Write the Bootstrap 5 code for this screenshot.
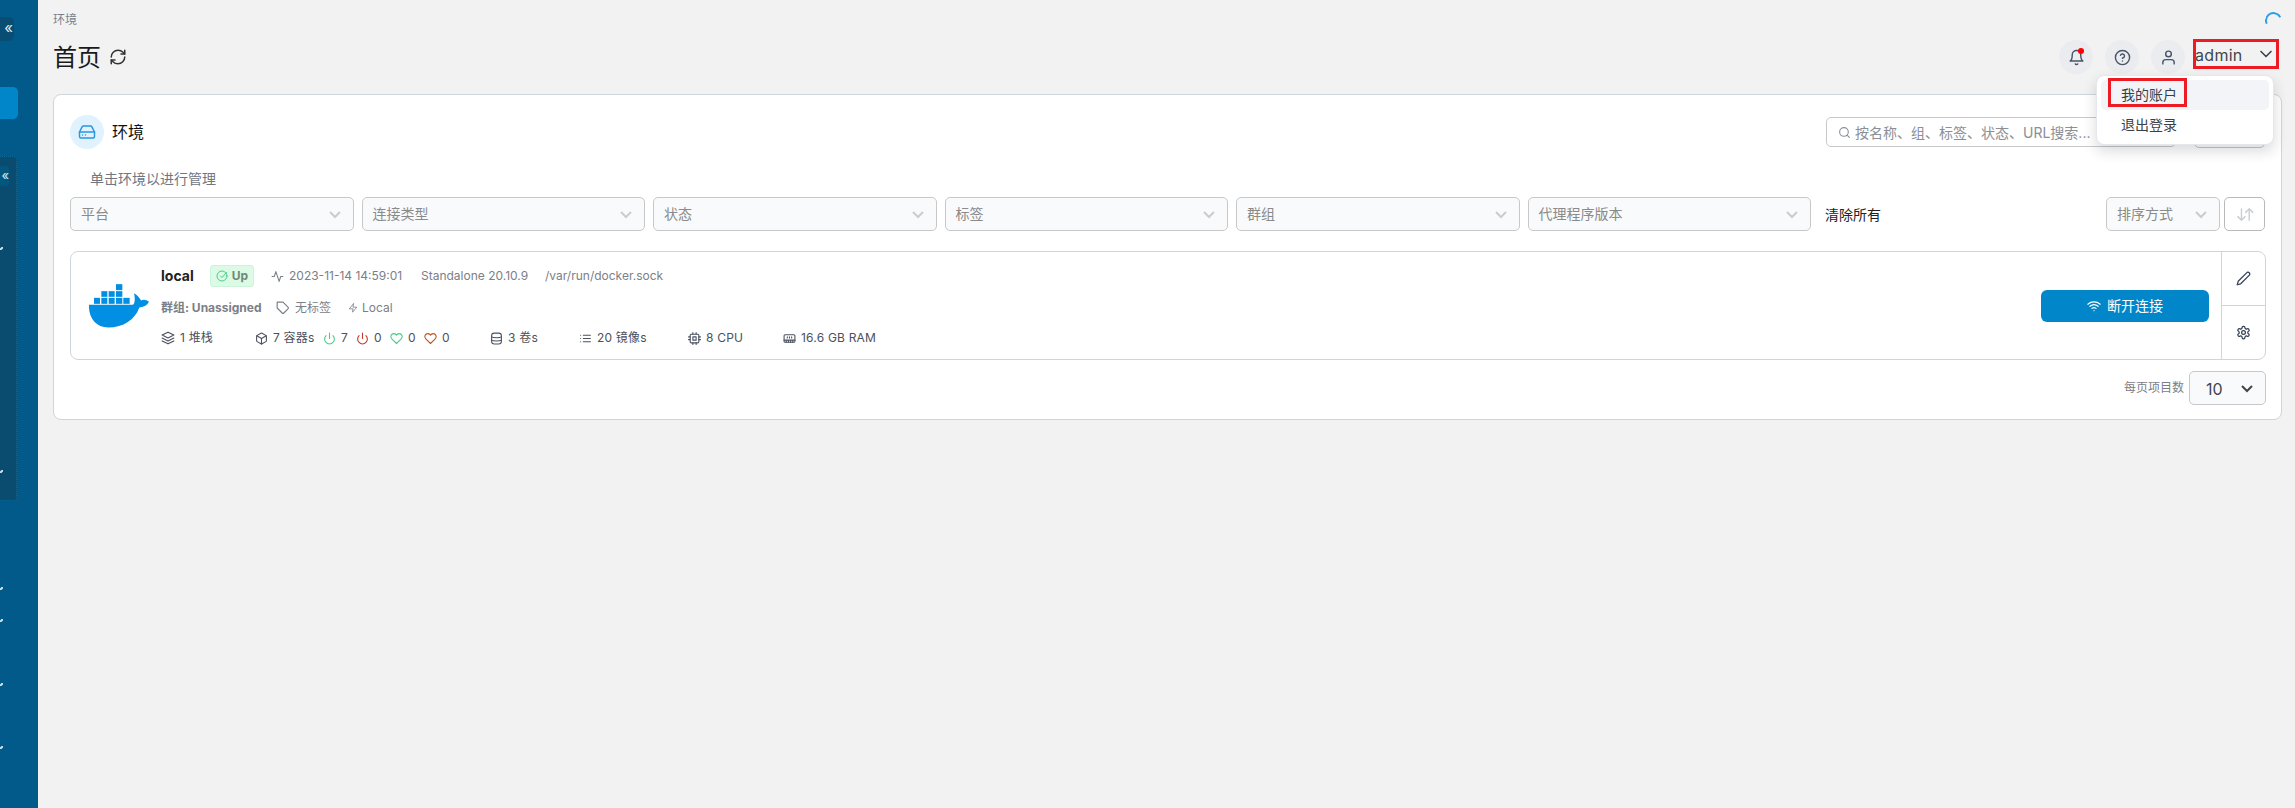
<!doctype html>
<html lang="zh"><head><meta charset="utf-8"><title>环境</title>
<link href="https://cdn.jsdelivr.net/npm/bootstrap@5.3.0/dist/css/bootstrap.min.css" rel="stylesheet">
<style>
html,body{height:808px;overflow:hidden}
body{background:#f2f2f2;font-family:Inter,"Noto Sans CJK SC",sans-serif;color:#344054;font-size:12px}
.ic{fill:none;stroke:currentColor;stroke-width:2;stroke-linecap:round;stroke-linejoin:round;flex:none}
.side-rail{width:38px;height:808px;background:#025a8b;flex:none;overflow:hidden}
.rail-logo{width:14px;height:24px;margin-top:17px;background:#0a4d73;border-radius:0 5px 5px 0;color:#dfe8ee;font-size:15px;line-height:22px;text-align:right;padding-right:1px;overflow:hidden}
.rail-active{width:18px;height:32px;margin-top:46px;background:#0086c9;border-radius:0 5px 5px 0}
.rail-panel{width:17px;height:345px;margin-top:37px;background:#0a4b70;border:1px dotted #0f6a9a;border-left:0;border-radius:0 4px 4px 0;overflow:hidden}
.rail-mini{width:9px;height:20px;margin-top:9px;background:#03577f;border-radius:0 4px 4px 0;color:#dfe8ee;font-size:13px;line-height:19px;text-align:right;overflow:hidden}
.tick{display:block;width:3px;height:3px;color:#cfe0ea}
.t1{margin-top:61px}.t2{margin-top:220px}.t3{margin-top:86px}.t4{margin-top:29px}.t5{margin-top:61px}.t6{margin-top:60px}
.page-main{flex:1 1 0;min-width:0;padding:10px 13px 0 15px;position:relative}
.crumb{font-size:12px;line-height:20px;color:#7b8087}
.head-row{height:54px;margin-top:10px;margin-right:3px}
.page-title{font-size:24px;line-height:36px;font-weight:400;color:#1a1a1a;margin:0}
.round-set{gap:12px}
.round-btn{width:34px;height:34px;border-radius:50%;background:#eaecf0;color:#475467;position:relative}
.bell-dot{position:absolute;top:8px;left:19px;width:6px;height:6px;border-radius:50%;background:#f00}
.user-menu{position:relative;width:86px;height:30px;margin-top:-1px;border:3px solid #ed1c24;color:#3f4650;font-size:16px;line-height:26px;padding-top:2px;letter-spacing:.3px;margin-left:0}
.user-menu>span{margin-left:-1px}
.user-menu .chev{margin-left:auto;margin-top:-2px}
.menu-open{display:block;position:absolute;top:33px;right:2px;left:auto;width:178px;height:70px;min-width:0;padding:4px;border:1px solid #e4e7ec;border-radius:8px;box-shadow:0 6px 14px rgba(16,24,40,.16);margin:0;z-index:5;letter-spacing:0}
.menu-open .dropdown-item{height:30px;padding:0 0 0 20px;line-height:30px;font-size:14px;color:#3a3f47;border-radius:5px;position:relative}
.menu-open .dropdown-item.on{background:#f2f4f7}
.mark-box{position:absolute;left:7px;top:-2px;width:79px;height:29px;border:3px solid #ed1c24}
.spin{position:absolute;top:12px;right:13px;width:17px;height:17px;border-radius:50%;border:2px solid transparent;border-top-color:#2e9fe0;border-left-color:#2e9fe0;transform:rotate(20deg)}
.env-card{border:1px solid #d0d5dd;border-radius:8px;background:#fff;height:326px;padding:20px 15px 0 16px}
.badge-ic{width:34px;height:34px;border-radius:50%;background:#e0f2fe;color:#2a98dd}
.env-title{font-size:16px;color:#111;margin-left:8px}
.find-box{width:350px;height:30px;border:1px solid #c8c8c8;border-radius:5px;color:#8a8f98;padding-left:11px;margin-right:18px}
.find-input{border:0;outline:0;padding:0;margin-left:4px;font-size:14px;flex:1;min-width:0;background:transparent;height:26px}
.find-input::placeholder{color:#8a8f98;opacity:1}
.hidden-btn{width:71px;height:31px;border:1px solid #c8c8c8;border-radius:5px;margin-right:1px}
.sub-note{font-size:14px;line-height:21px;color:#6f7682;margin:19px 0 8px 20px}
.filter-row{gap:8px}
.pick{width:283.5px;height:34px;padding:0 10px;font-size:14px;line-height:32px;color:#8a8a8a;background-color:#f9fafb;border:1px solid #c8c8c8;border-radius:5px;flex:none;background-size:auto;background-position:right 8px center;background-repeat:no-repeat;
background-image:url("data:image/svg+xml,%3Csvg xmlns='http://www.w3.org/2000/svg' width='20' height='20' viewBox='0 0 20 20'%3E%3Cpath d='M5 8l5 5 5-5' fill='none' stroke='%23ccc' stroke-width='2'/%3E%3C/svg%3E")}
.clear-all{font-size:14px;color:#222;margin-left:6px;white-space:nowrap}
.pick-sort{width:114px;margin-left:auto}
.sort-btn{width:41px;height:34px;border:1px solid #b9b9b9;border-radius:5px;color:#c9ced6;margin-left:-4px;margin-right:1px;background:#fff}
.env-item{height:109px;margin-top:20px;border:1px solid #d0d5dd;border-radius:8px;overflow:hidden}
.whale-cell{width:90px;flex:none;padding-left:18px}
.info-col{flex:1 1 0;min-width:0;padding-top:13px}
.inf{height:22px;line-height:22px;white-space:nowrap;color:#7b8087}
.inf+.inf{margin-top:10px}.inf.r3{margin-top:8px;color:#4a5160}
.env-name{font-size:14px;font-weight:700;color:#222;width:49px}
.up-badge{width:44px;height:22px;background:#dcfae6;border:1px solid #cbf5d8;border-radius:3px;color:#6c8a78;font-weight:700;font-size:12px;margin-right:17px}
.cell{flex:none}
.w18{width:18px}.w132{width:132px}.w124{width:124px}.w115{width:115px}.w19{width:19px}
.w53{width:53px}.w14{width:14px}
.r3 .s1{width:94px}.r3 .s2{width:68px}.r3 .s3{width:33px}.r3 .s4{width:34px}.r3 .s5{width:66px}.r3 .s6{width:89px}.r3 .s7{width:109px}.r3 .s8{width:95px}
.lbl{margin-left:5px;letter-spacing:.2px}
.g-on{color:#47cd89}.r-off{color:#c0392b}.o-heart{color:#c4541d}
.dark-ic{color:#333}
.up-ic{color:#47cd89}
.drop-btn{width:168px;height:32px;background:#0086c9;border:0;border-radius:6px;color:#fff;font-size:14px;margin-right:12px;padding:0;font-weight:400;gap:6px}
.side-acts{width:44px;flex:none;border-left:1px solid #d0d5dd;color:#344054}
.side-acts>div{flex:1}
.side-acts>div+div{border-top:1px solid #d0d5dd}
.foot-row{margin-top:11px}
.foot-lbl{font-size:12px;color:#7b8087;margin-right:5px}
.pick-size{width:77px;color:#3f4650;font-size:16px;line-height:34px;padding-left:16px;
background-image:url("data:image/svg+xml,%3Csvg xmlns='http://www.w3.org/2000/svg' width='20' height='20' viewBox='0 0 20 20'%3E%3Cpath d='M5 8l5 5 5-5' fill='none' stroke='%23444' stroke-width='2'/%3E%3C/svg%3E")}
</style></head>
<body>
<svg width="0" height="0" class="position-absolute"><defs>
<symbol id="i-refresh" viewBox="0 0 24 24"><path d="M3 12a9 9 0 0 1 9-9 9.75 9.75 0 0 1 6.74 2.74L21 8"/><path d="M21 3v5h-5"/><path d="M21 12a9 9 0 0 1-9 9 9.75 9.75 0 0 1-6.74-2.74L3 16"/><path d="M8 16H3v5"/></symbol>
<symbol id="i-drive" viewBox="0 0 24 24"><path d="M22 12H2"/><path d="M5.45 5.11 2 12v6a2 2 0 0 0 2 2h16a2 2 0 0 0 2-2v-6l-3.45-6.89A2 2 0 0 0 16.76 4H7.24a2 2 0 0 0-1.79 1.11z"/><path d="M6 16h.01M10 16h.01"/></symbol>
<symbol id="i-bell" viewBox="0 0 24 24"><path d="M18 8A6 6 0 0 0 6 8c0 7-3 9-3 9h18s-3-2-3-9"/><path d="M13.73 21a2 2 0 0 1-3.46 0"/></symbol>
<symbol id="i-help" viewBox="0 0 24 24"><circle cx="12" cy="12" r="10"/><path d="M9.09 9a3 3 0 0 1 5.83 1c0 2-3 3-3 3"/><path d="M12 17h.01"/></symbol>
<symbol id="i-user" viewBox="0 0 24 24"><path d="M20 21v-2a4 4 0 0 0-4-4H8a4 4 0 0 0-4 4v2"/><circle cx="12" cy="7" r="4"/></symbol>
<symbol id="i-chev" viewBox="0 0 24 24"><path d="M6 9l6 6 6-6"/></symbol>
<symbol id="i-search" viewBox="0 0 24 24"><circle cx="11" cy="11" r="8"/><path d="M21 21l-4.35-4.35"/></symbol>
<symbol id="i-sort" viewBox="0 0 24 24"><path d="M7 4v16M2 15l5 5 5-5"/><path d="M18 20V4M13 9l5-5 5 5"/></symbol>
<symbol id="i-check" viewBox="0 0 24 24"><circle cx="12" cy="12" r="10"/><path d="M21 5l-9 10-3-3"/></symbol>
<symbol id="i-activity" viewBox="0 0 24 24"><path d="M22 12h-4l-3 9-6-18-3 9H2"/></symbol>
<symbol id="i-tag" viewBox="0 0 24 24"><path d="M20.59 13.41l-7.17 7.17a2 2 0 0 1-2.83 0L2 12V2h10l8.59 8.59a2 2 0 0 1 0 2.82z"/></symbol>
<symbol id="i-zap" viewBox="0 0 24 24"><path d="M13 2L3 14h9l-1 8 10-12h-9l1-8z"/></symbol>
<symbol id="i-layers" viewBox="0 0 24 24"><path d="M12 2L2 7l10 5 10-5-10-5z"/><path d="M2 17l10 5 10-5"/><path d="M2 12l10 5 10-5"/></symbol>
<symbol id="i-box" viewBox="0 0 24 24"><path d="M21 16V8a2 2 0 0 0-1-1.73l-7-4a2 2 0 0 0-2 0l-7 4A2 2 0 0 0 3 8v8a2 2 0 0 0 1 1.73l7 4a2 2 0 0 0 2 0l7-4A2 2 0 0 0 21 16z"/><path d="M3.27 6.96L12 12.01l8.73-5.05"/><path d="M12 22.08V12"/></symbol>
<symbol id="i-power" viewBox="0 0 24 24"><path d="M18.36 6.64a9 9 0 1 1-12.73 0"/><path d="M12 2v10"/></symbol>
<symbol id="i-heart" viewBox="0 0 24 24"><path d="M20.84 4.61a5.5 5.5 0 0 0-7.78 0L12 5.67l-1.06-1.06a5.5 5.5 0 0 0-7.78 7.78l1.06 1.06L12 21.23l7.78-7.78 1.06-1.06a5.5 5.5 0 0 0 0-7.78z"/></symbol>
<symbol id="i-db" viewBox="0 0 24 24"><rect x="3" y="2" width="18" height="20" rx="5"/><path d="M3 9c3 2 15 2 18 0M3 15c3 2 15 2 18 0"/></symbol>
<symbol id="i-list" viewBox="0 0 24 24"><path d="M8 6h13M8 12h13M8 18h13M3 6h.01M3 12h.01M3 18h.01"/></symbol>
<symbol id="i-cpu" viewBox="0 0 24 24"><rect x="4" y="4" width="16" height="16" rx="2"/><rect x="9" y="9" width="6" height="6"/><path d="M9 1v3M15 1v3M9 20v3M15 20v3M20 9h3M20 14h3M1 9h3M1 14h3"/></symbol>
<symbol id="i-ram" viewBox="0 0 24 24"><path d="M6 19v-3M10 19v-3M14 19v-3M18 19v-3M8 11V9M16 11V9M12 11V9M2 15h20"/><path d="M2 7a2 2 0 0 1 2-2h16a2 2 0 0 1 2 2v10a2 2 0 0 1-2 2H4a2 2 0 0 1-2-2z"/></symbol>
<symbol id="i-wifi" viewBox="0 0 24 24"><path d="M5 12.55a11 11 0 0 1 14.08 0"/><path d="M1.42 9a16 16 0 0 1 21.16 0"/><path d="M8.53 16.11a6 6 0 0 1 6.95 0"/><path d="M12 20h.01"/></symbol>
<symbol id="i-pen" viewBox="0 0 24 24"><path d="M17 3a2.85 2.83 0 1 1 4 4L7.5 20.5 2 22l1.5-5.5Z"/></symbol>
<symbol id="i-gear" viewBox="0 0 24 24"><path d="M12.22 2h-.44a2 2 0 0 0-2 2v.18a2 2 0 0 1-1 1.73l-.43.25a2 2 0 0 1-2 0l-.15-.08a2 2 0 0 0-2.73.73l-.22.38a2 2 0 0 0 .73 2.73l.15.1a2 2 0 0 1 1 1.72v.51a2 2 0 0 1-1 1.74l-.15.09a2 2 0 0 0-.73 2.73l.22.38a2 2 0 0 0 2.73.73l.15-.08a2 2 0 0 1 2 0l.43.25a2 2 0 0 1 1 1.73V20a2 2 0 0 0 2 2h.44a2 2 0 0 0 2-2v-.18a2 2 0 0 1 1-1.73l.43-.25a2 2 0 0 1 2 0l.15.08a2 2 0 0 0 2.73-.73l.22-.39a2 2 0 0 0-.73-2.73l-.15-.08a2 2 0 0 1-1-1.74v-.5a2 2 0 0 1 1-1.74l.15-.09a2 2 0 0 0 .73-2.73l-.22-.38a2 2 0 0 0-2.73-.73l-.15.08a2 2 0 0 1-2 0l-.43-.25a2 2 0 0 1-1-1.73V4a2 2 0 0 0-2-2z"/><circle cx="12" cy="12" r="3"/></symbol>
</defs></svg>

<div class="d-flex">
  <aside class="side-rail">
    <div class="rail-logo">«</div>
    <div class="rail-active"></div>
    <div class="rail-panel">
      <div class="rail-mini">«</div>
      <svg class="ic tick t1" viewBox="0 0 3 3"><path d="M0 3l3-3"/></svg>
      <svg class="ic tick t2" viewBox="0 0 3 3"><path d="M0 3l3-3"/></svg>
    </div>
    <svg class="ic tick t3" viewBox="0 0 3 3"><path d="M0 3l3-3"/></svg>
    <svg class="ic tick t4" viewBox="0 0 3 3"><path d="M0 3l3-3"/></svg>
    <svg class="ic tick t5" viewBox="0 0 3 3"><path d="M0 3l3-3"/></svg>
    <svg class="ic tick t6" viewBox="0 0 3 3"><path d="M0 3l3-3"/></svg>
  </aside>

  <main class="page-main">
    <div class="spin"></div>
    <div class="crumb">环境</div>
    <div class="head-row d-flex align-items-start">
      <h1 class="page-title">首页</h1>
      <svg class="ic dark-ic ms-2 mt-2" width="18" height="18"><use href="#i-refresh"/></svg>
      <div class="ms-auto d-flex align-items-start gap-2">
        <div class="d-flex round-set">
          <div class="round-btn d-flex align-items-center justify-content-center"><svg class="ic" width="17" height="17"><use href="#i-bell"/></svg><span class="bell-dot"></span></div>
          <div class="round-btn d-flex align-items-center justify-content-center"><svg class="ic" width="17" height="17"><use href="#i-help"/></svg></div>
          <div class="round-btn d-flex align-items-center justify-content-center"><svg class="ic" width="17" height="17"><use href="#i-user"/></svg></div>
        </div>
        <div class="user-menu d-flex align-items-center">
          <span>admin</span>
          <svg class="ic chev" width="20" height="20"><use href="#i-chev"/></svg>
          <div class="dropdown-menu menu-open">
            <a class="dropdown-item on" href="#">我的账户<span class="mark-box"></span></a>
            <a class="dropdown-item" href="#">退出登录</a>
          </div>
        </div>
      </div>
    </div>

    <section class="env-card">
      <div class="d-flex align-items-center">
        <div class="badge-ic d-flex align-items-center justify-content-center"><svg class="ic" width="18" height="18"><use href="#i-drive"/></svg></div>
        <div class="env-title">环境</div>
        <div class="find-box ms-auto d-flex align-items-center">
          <svg class="ic" width="13" height="13"><use href="#i-search"/></svg>
          <input class="find-input" placeholder="按名称、组、标签、状态、URL搜索...">
        </div>
        <div class="hidden-btn"></div>
      </div>
      <div class="sub-note">单击环境以进行管理</div>
      <div class="d-flex align-items-center filter-row">
        <div class="form-select pick">平台</div>
        <div class="form-select pick">连接类型</div>
        <div class="form-select pick">状态</div>
        <div class="form-select pick">标签</div>
        <div class="form-select pick">群组</div>
        <div class="form-select pick">代理程序版本</div>
        <div class="clear-all">清除所有</div>
        <div class="form-select pick pick-sort">排序方式</div>
        <div class="sort-btn d-flex align-items-center justify-content-center"><svg class="ic" width="20" height="17"><use href="#i-sort"/></svg></div>
      </div>

      <div class="env-item d-flex">
        <div class="whale-cell d-flex align-items-center">
          <svg width="60" height="44" viewBox="87 128 180 131" fill="#008fe2">
            <path d="M87 190H218C225 188 226 170 222 155C232 160 240 170 243 177C250 173 260 175 267 181C262 192 248 198 238 198C225 235 190 258 145 258C105 258 85 225 87 190Z"/>
            <rect x="168" y="128" width="19" height="18"/>
            <rect x="124" y="149" width="18" height="17"/><rect x="146" y="149" width="18" height="17"/><rect x="168" y="149" width="19" height="17"/>
            <rect x="102" y="169" width="18" height="18"/><rect x="124" y="169" width="18" height="18"/><rect x="146" y="169" width="18" height="18"/><rect x="168" y="169" width="19" height="18"/><rect x="190" y="169" width="19" height="18"/>
          </svg>
        </div>
        <div class="info-col">
          <div class="inf d-flex align-items-center">
            <div class="cell env-name">local</div>
            <div class="cell up-badge d-flex align-items-center justify-content-center gap-1"><svg class="ic up-ic" width="12" height="12"><use href="#i-check"/></svg>Up</div>
            <div class="cell w18"><svg class="ic d-block" width="13" height="13"><use href="#i-activity"/></svg></div>
            <div class="cell w132">2023-11-14 14:59:01</div>
            <div class="cell w124">Standalone 20.10.9</div>
            <div class="cell">/var/run/docker.sock</div>
          </div>
          <div class="inf d-flex align-items-center">
            <div class="cell w115 fw-bold">群组: Unassigned</div>
            <div class="cell w19"><svg class="ic d-block" width="14" height="14"><use href="#i-tag"/></svg></div>
            <div class="cell w53">无标签</div>
            <div class="cell w14"><svg class="ic d-block" width="10" height="10"><use href="#i-zap"/></svg></div>
            <div class="cell">Local</div>
          </div>
          <div class="inf r3 d-flex align-items-center">
            <div class="cell s1 d-flex align-items-center"><svg class="ic" width="14" height="14"><use href="#i-layers"/></svg><span class="lbl">1 堆栈</span></div>
            <div class="cell s2 d-flex align-items-center"><svg class="ic" width="13" height="13"><use href="#i-box"/></svg><span class="lbl">7 容器s</span></div>
            <div class="cell s3 d-flex align-items-center"><svg class="ic g-on" width="13" height="13"><use href="#i-power"/></svg><span class="lbl">7</span></div>
            <div class="cell s4 d-flex align-items-center"><svg class="ic r-off" width="13" height="13"><use href="#i-power"/></svg><span class="lbl">0</span></div>
            <div class="cell s4 d-flex align-items-center"><svg class="ic g-on" width="13" height="13"><use href="#i-heart"/></svg><span class="lbl">0</span></div>
            <div class="cell s5 d-flex align-items-center"><svg class="ic o-heart" width="13" height="13"><use href="#i-heart"/></svg><span class="lbl">0</span></div>
            <div class="cell s6 d-flex align-items-center"><svg class="ic" width="13" height="13"><use href="#i-db"/></svg><span class="lbl">3 卷s</span></div>
            <div class="cell s7 d-flex align-items-center"><svg class="ic" width="13" height="13"><use href="#i-list"/></svg><span class="lbl">20 镜像s</span></div>
            <div class="cell s8 d-flex align-items-center"><svg class="ic" width="13" height="13"><use href="#i-cpu"/></svg><span class="lbl">8 CPU</span></div>
            <div class="cell d-flex align-items-center"><svg class="ic" width="13" height="13"><use href="#i-ram"/></svg><span class="lbl">16.6 GB RAM</span></div>
          </div>
        </div>
        <div class="d-flex align-items-center">
          <button class="btn drop-btn d-flex align-items-center justify-content-center"><svg class="ic" width="14" height="14"><use href="#i-wifi"/></svg><span>断开连接</span></button>
        </div>
        <div class="side-acts d-flex flex-column">
          <div class="d-flex align-items-center justify-content-center"><svg class="ic" width="15" height="15"><use href="#i-pen"/></svg></div>
          <div class="d-flex align-items-center justify-content-center"><svg class="ic" width="15" height="15"><use href="#i-gear"/></svg></div>
        </div>
      </div>

      <div class="foot-row d-flex justify-content-end align-items-center">
        <span class="foot-lbl">每页项目数</span>
        <div class="form-select pick pick-size">10</div>
      </div>
    </section>
  </main>
</div>
<script src="https://cdn.jsdelivr.net/npm/bootstrap@5.3.0/dist/js/bootstrap.bundle.min.js"></script>
</body></html>
